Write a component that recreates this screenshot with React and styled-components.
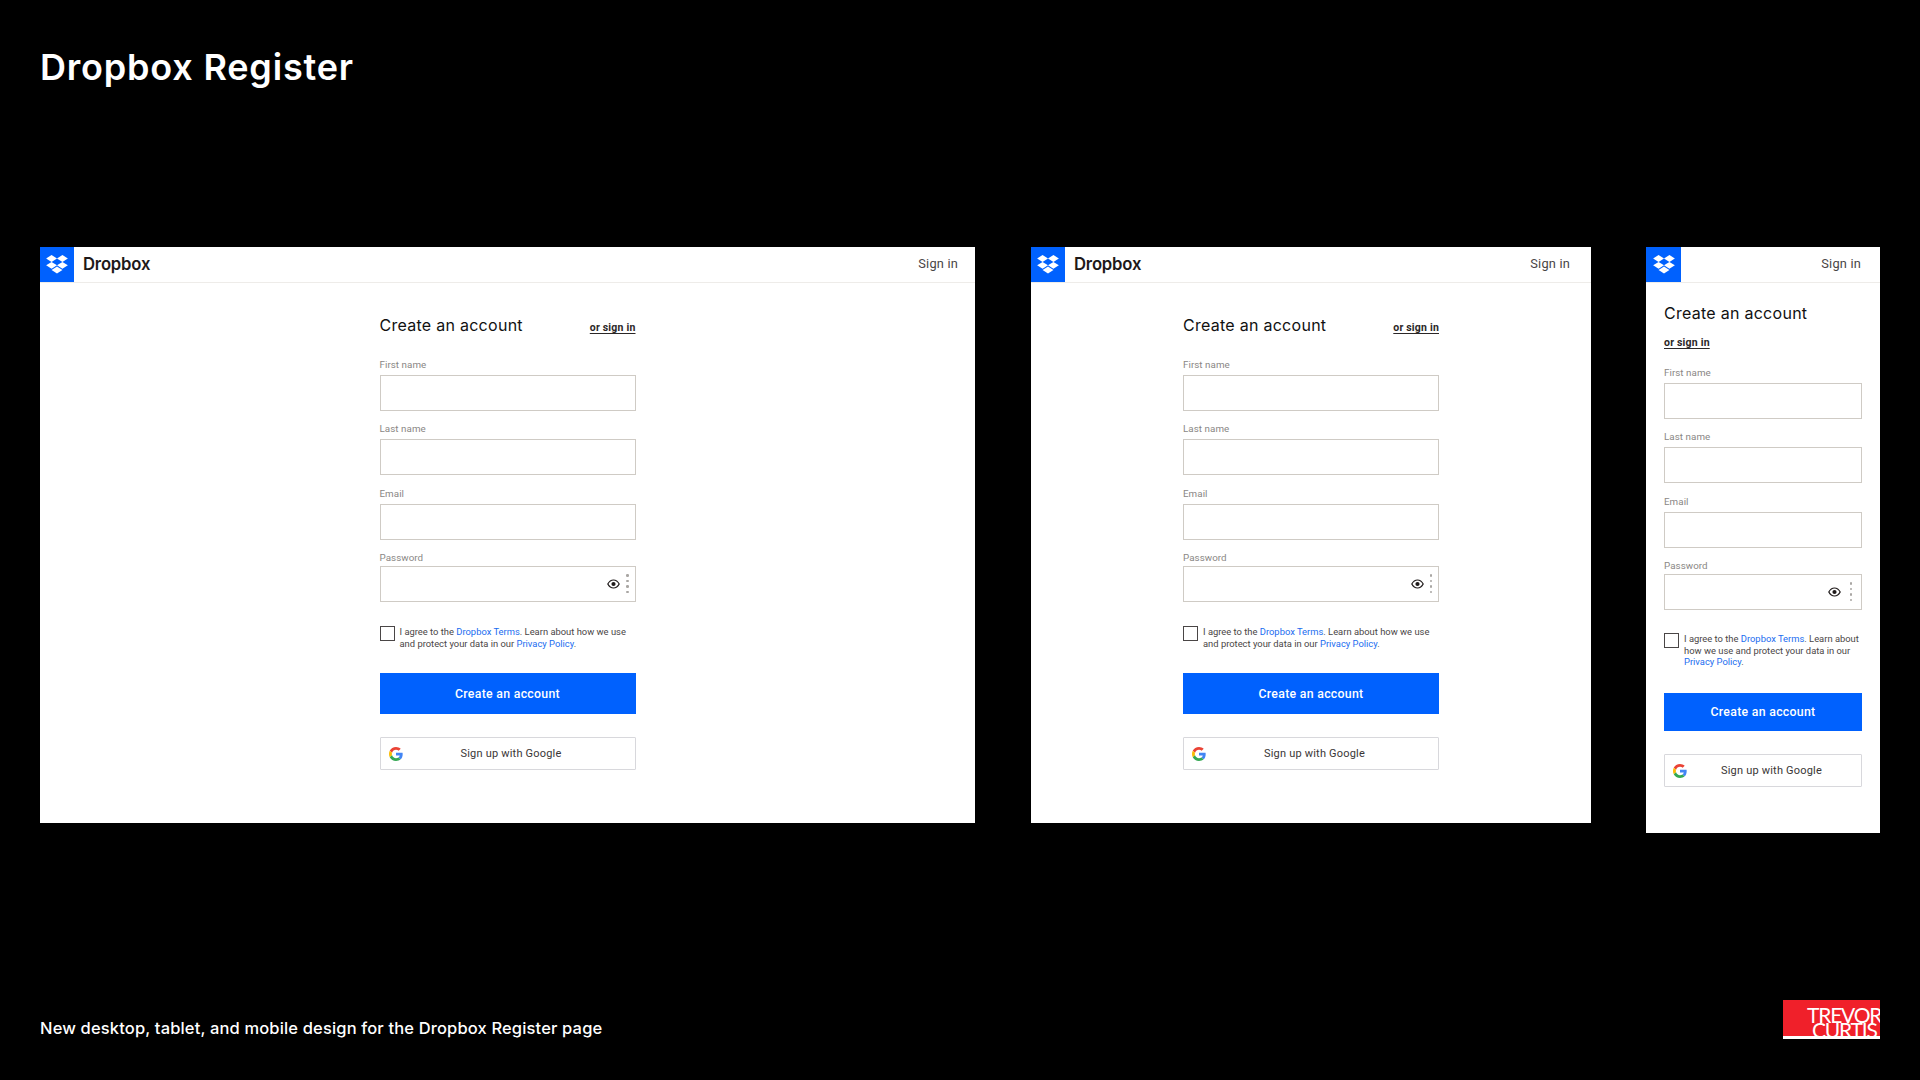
import React from "react";
import styled, { createGlobalStyle } from "styled-components";

const Global = createGlobalStyle`
  html, body { margin: 0; padding: 0; background: #000; }
  * { box-sizing: border-box; }
`;

const Page = styled.div`
  width: 1920px;
  height: 1080px;
  background: #000;
  color: #fff;
  padding: 44px 40px 41px;
  display: flex;
  flex-direction: column;
  overflow: hidden;
  font-family: Inter, "Noto Sans", sans-serif;
`;
const Title = styled.h1`
  margin: 0;
  font-size: 36px;
  line-height: 46px;
  font-weight: 600;
  letter-spacing: 0.8px;
`;
const Frames = styled.div`
  margin-top: 157px;
  display: flex;
  align-items: flex-start;
`;
const Frame = styled.section`
  width: ${(p) => p.$w}px;
  height: ${(p) => p.$h}px;
  margin-right: ${(p) => p.$gap}px;
  background: #fff;
  color: #1e1919;
  display: flex;
  flex-direction: column;
  flex: none;
`;
const TopBar = styled.header`
  height: 36px;
  flex: none;
  display: flex;
  align-items: center;
  justify-content: space-between;
  border-bottom: 1px solid #eeece9;
  padding-right: ${(p) => p.$pr}px;
`;
const Brand = styled.div`
  display: flex;
  align-items: center;
  gap: 9px;
  height: 35px;
`;
const LogoSquare = styled.div`
  width: ${(p) => (p.$mobile ? 35 : 34)}px;
  height: 35px;
  background: #0061fe;
  display: flex;
  align-items: center;
  justify-content: center;
`;
const Wordmark = styled.span`
  font-size: 16.7px;
  font-weight: 600;
  letter-spacing: -0.2px;
  color: #1e1919;
  padding-bottom: 2px;
`;
const SignIn = styled.span`
  font-size: 12.8px;
  font-weight: 400;
  letter-spacing: 0.2px;
  color: #4a4646;
  font-family: Roboto, sans-serif;
  padding-bottom: 2px;
`;
const Form = styled.form`
  width: ${(p) => (p.$mobile ? 198 : 256)}px;
  align-self: center;
  display: flex;
  flex-direction: column;
  padding-top: ${(p) => (p.$mobile ? 19 : 31)}px;
`;
const HeadRow = styled.div`
  display: flex;
  flex-direction: ${(p) => (p.$mobile ? "column" : "row")};
  align-items: ${(p) => (p.$mobile ? "flex-start" : "flex-end")};
  justify-content: space-between;
  gap: ${(p) => (p.$mobile ? "12px" : "0")};
  margin-bottom: ${(p) => (p.$mobile ? 18 : 23)}px;
`;
const Heading = styled.h2`
  margin: 0;
  font-size: 16px;
  line-height: 22px;
  font-weight: 400;
  letter-spacing: 0.27px;
  color: #111;
  font-family: Inter, sans-serif;
`;
const OrSignIn = styled.a`
  font-family: Roboto, sans-serif;
  font-size: 10.5px;
  line-height: 13px;
  font-weight: 700;
  letter-spacing: 0.2px;
  color: #2b2727;
  text-decoration: underline;
  text-underline-offset: 2px;
  margin-bottom: ${(p) => (p.$mobile ? 0 : 2)}px;
`;
const Label = styled.label`
  display: block;
  font-family: Roboto, sans-serif;
  font-size: 9.8px;
  line-height: 12px;
  letter-spacing: 0.05px;
  color: #8a8785;
  margin-bottom: 4px;
`;
const Group = styled.div`
  margin-bottom: ${(p) => p.$mb ?? 12.3}px;
`;
const Input = styled.input`
  display: block;
  width: 100%;
  height: 36px;
  border: 1px solid #cfcbc5;
  border-radius: 0;
  background: #fff;
  outline: none;
`;
const PasswordBox = styled.div`
  height: 36px;
  margin-top: -2px;
  border: 1px solid #cfcbc5;
  display: flex;
  align-items: center;
  justify-content: flex-end;
  gap: ${(p) => (p.$mobile ? 9 : 6)}px;
  padding-right: ${(p) => (p.$mobile ? 9 : 6)}px;
`;
const Dots = styled.div`
  display: flex;
  flex-direction: column;
  gap: 3px;
  & > i {
    display: block;
    width: 2.5px;
    height: 2.5px;
    border-radius: 50%;
    background: #a9a6a3;
  }
`;
const TermsRow = styled.div`
  display: flex;
  align-items: flex-start;
  gap: 5px;
  margin-top: ${(p) => (p.$mobile ? 23 : 24)}px;
`;
const Check = styled.input`
  appearance: none;
  margin: 0;
  flex: none;
  width: 15px;
  height: 15px;
  border: 1.5px solid #4a4646;
  background: #fff;
`;
const Terms = styled.p`
  margin: 0;
  font-family: Roboto, sans-serif;
  font-size: 9.4px;
  line-height: 11.7px;
  color: #4a4646;
  & a { color: #1a6cf0; }
`;
const Primary = styled.button`
  width: 100%;
  height: ${(p) => (p.$mobile ? 38 : 41)}px;
  margin-top: ${(p) => (p.$mobile ? 25 : 24)}px;
  border: 0;
  background: #0061fe;
  color: #fff;
  font-family: Roboto, sans-serif;
  font-size: 12.3px;
  font-weight: 500;
  letter-spacing: 0.3px;
`;
const GoogleBtn = styled.button`
  width: 100%;
  height: 33px;
  margin-top: 23px;
  border: 1px solid #d8d8dc;
  border-radius: 1px;
  background: #fff;
  display: flex;
  align-items: center;
  padding: 0 8px;
  color: #3a3636;
  font-family: Roboto, sans-serif;
  font-size: 11px;
  letter-spacing: 0.2px;
`;
const GoogleLabel = styled.span`
  flex: 1;
  text-align: center;
  padding-left: 6px;
  padding-right: ${(p) => (p.$mobile ? 3 : 13)}px;
`;
const Footer = styled.footer`
  margin-top: auto;
  display: flex;
  align-items: flex-end;
  justify-content: space-between;
`;
const Caption = styled.p`
  margin: 0 0 1px;
  font-size: 16.5px;
  line-height: 20px;
  font-weight: 500;
  letter-spacing: 0.15px;
`;
const RedMark = styled.div`
  width: 97px;
  height: 39px;
  background: #f0202a;
  border-bottom: 3px solid #fff;
  overflow: hidden;
  font-family: Lato, sans-serif;
  font-weight: 400;
  font-size: 21px;
  line-height: 15px;
  letter-spacing: -1.2px;
  color: #fff;
  padding-top: 7px;
  white-space: nowrap;
`;
const MarkLine = styled.div`
  padding-left: ${(p) => p.$indent}px;
`;

const DropboxIcon = () => (
  <svg width="22" height="19" viewBox="0 0 24 21" fill="#fff">
    <polygon points="6,0 12,3.8 6,7.6 0,3.8" />
    <polygon points="18,0 24,3.8 18,7.6 12,3.8" />
    <polygon points="6,7.6 12,11.4 6,15.2 0,11.4" />
    <polygon points="18,7.6 24,11.4 18,15.2 12,11.4" />
    <polygon points="12,12.8 18,16.6 12,20.4 6,16.6" />
  </svg>
);
const EyeIcon = () => (
  <svg width="13" height="10" viewBox="0 0 13 10">
    <path d="M.8 5C2.2 2.4 4.2 1 6.5 1s4.3 1.4 5.7 4c-1.4 2.6-3.4 4-5.7 4S2.2 7.6.8 5z" fill="none" stroke="#1e1919" strokeWidth="1.2" />
    <circle cx="6.5" cy="5" r="2.1" fill="#1e1919" />
  </svg>
);
const GoogleIcon = () => (
  <svg width="14" height="14" viewBox="0 0 48 48">
    <path fill="#EA4335" d="M24 9.5c3.5 0 6.7 1.2 9.2 3.6l6.9-6.9C35.9 2.4 30.5 0 24 0 14.6 0 6.5 5.4 2.6 13.2l8 6.2C12.5 13.7 17.8 9.5 24 9.5z" />
    <path fill="#4285F4" d="M46.9 24.5c0-1.6-.1-3.1-.4-4.5H24v9h12.9c-.6 3-2.2 5.5-4.7 7.2l7.7 6c4.5-4.2 7-10.3 7-17.7z" />
    <path fill="#FBBC05" d="M10.5 28.6c-.5-1.4-.8-3-.8-4.6s.3-3.2.8-4.6l-8-6.2C.9 16.5 0 20.1 0 24s.9 7.5 2.6 10.8l7.9-6.2z" />
    <path fill="#34A853" d="M24 48c6.5 0 11.9-2.1 15.9-5.8l-7.7-6c-2.2 1.4-4.9 2.3-8.2 2.3-6.2 0-11.5-4.2-13.4-9.9l-8 6.2C6.5 42.6 14.6 48 24 48z" />
  </svg>
);

function Card({ w, h, gap, pr, mobile }) {
  return (
    <Frame $w={w} $h={h} $gap={gap}>
      <TopBar $pr={pr}>
        <Brand>
          <LogoSquare $mobile={mobile}><DropboxIcon /></LogoSquare>
          {!mobile && <Wordmark>Dropbox</Wordmark>}
        </Brand>
        <SignIn>Sign in</SignIn>
      </TopBar>
      <Form $mobile={mobile}>
        <HeadRow $mobile={mobile}>
          <Heading>Create an account</Heading>
          <OrSignIn $mobile={mobile}>or sign in</OrSignIn>
        </HeadRow>
        <Group><Label>First name</Label><Input /></Group>
        <Group><Label>Last name</Label><Input /></Group>
        <Group><Label>Email</Label><Input /></Group>
        <Group $mb={0}>
          <Label>Password</Label>
          <PasswordBox $mobile={mobile}>
            <EyeIcon />
            <Dots><i /><i /><i /><i /></Dots>
          </PasswordBox>
        </Group>
        <TermsRow $mobile={mobile}>
          <Check type="checkbox" />
          <Terms>
            I agree to the <a>Dropbox Terms</a>. Learn about how we use{" "}
            and protect your data in our <a>Privacy Policy</a>.
          </Terms>
        </TermsRow>
        <Primary $mobile={mobile}>Create an account</Primary>
        <GoogleBtn>
          <GoogleIcon />
          <GoogleLabel $mobile={mobile}>Sign up with Google</GoogleLabel>
        </GoogleBtn>
      </Form>
    </Frame>
  );
}

export default function App() {
  return (
    <Page>
      <Global />
      <Title>Dropbox Register</Title>
      <Frames>
        <Card w={935} h={576} gap={56} pr={17} />
        <Card w={560} h={576} gap={55} pr={21} />
        <Card w={234} h={586} gap={0} pr={19} mobile />
      </Frames>
      <Footer>
        <Caption>New desktop, tablet, and mobile design for the Dropbox Register page</Caption>
        <RedMark>
          <MarkLine $indent={24}>TREVOR</MarkLine>
          <MarkLine $indent={29}>CURTIS</MarkLine>
        </RedMark>
      </Footer>
    </Page>
  );
}
